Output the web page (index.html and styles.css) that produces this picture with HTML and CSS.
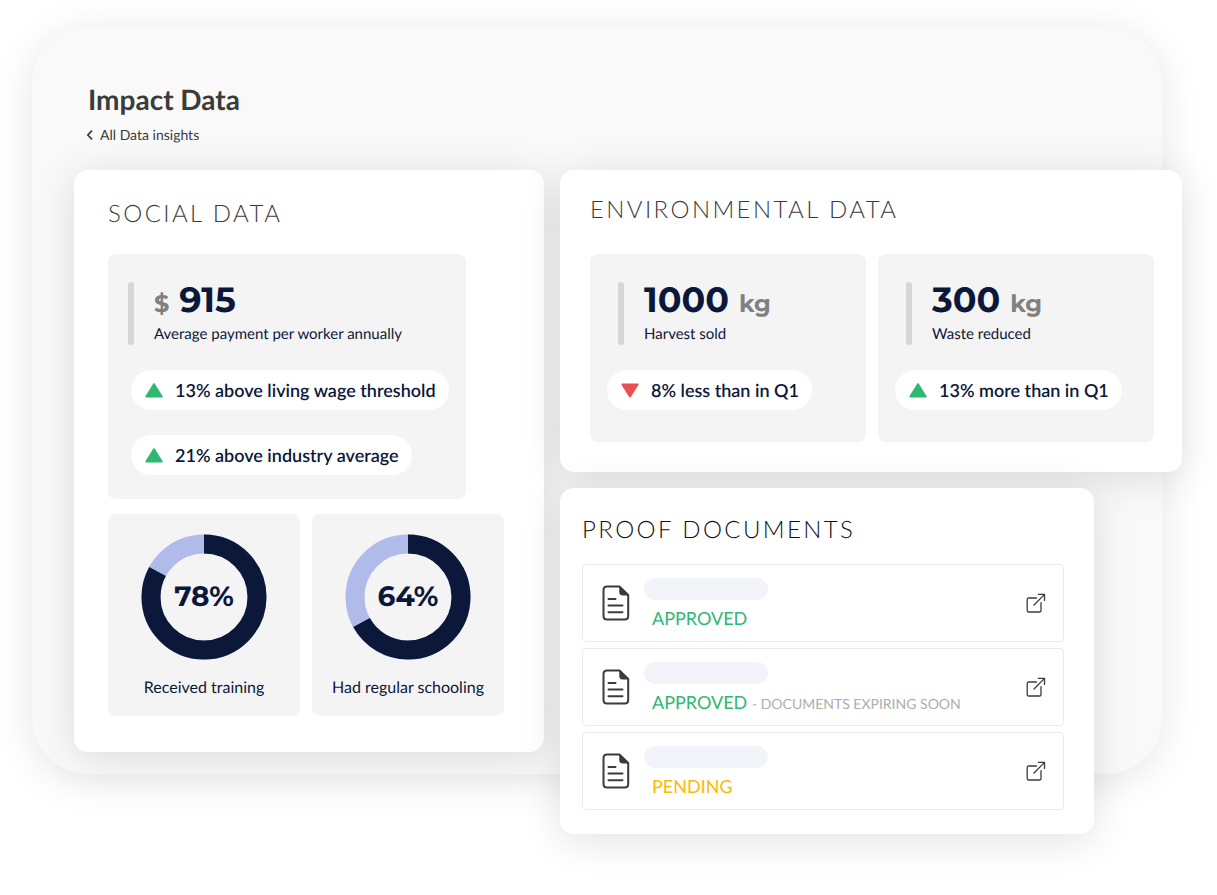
FILE: index.html
```html
<!DOCTYPE html>
<html lang="en">
<head>
  <meta charset="UTF-8" />
  <meta name="viewport" content="width=device-width, initial-scale=1" />
  <title>Impact Data</title>
  <link rel="stylesheet" href="styles.css">
</head>
<body>
  <svg class="sprite" aria-hidden="true">
    <symbol id="up" viewBox="0 0 18 15">
      <path d="M9 1.2 L16.6 13.6 H1.4 Z" fill="#2eb872" stroke="#2eb872" stroke-width="2" stroke-linejoin="round" />
    </symbol>
    <symbol id="down" viewBox="0 0 18 15">
      <path d="M9 13.4 L16.6 1.4 H1.4 Z" fill="#ea4f4f" stroke="#ea4f4f" stroke-width="2" stroke-linejoin="round" />
    </symbol>
    <symbol id="file" viewBox="0 0 28 36">
      <path d="M5 1.5 H17.5 L26.2 10 V31 Q26.2 34.5 22.7 34.5 H5 Q1.5 34.5 1.5 31 V5 Q1.5 1.5 5 1.5 Z" fill="none" stroke="#3b3b3b" stroke-width="2" stroke-linejoin="round" />
      <path d="M17.8 2 L26 10 H20 Q17.8 10 17.8 7.8 Z" fill="#3b3b3b" stroke="#3b3b3b" stroke-linejoin="round" />
      <path d="M6.5 14 H13.5 M6.5 20.5 H20.5 M6.5 27.2 H20.5" fill="none" stroke="#3b3b3b" stroke-width="2" stroke-linecap="round" />
    </symbol>
    <symbol id="external" viewBox="0 0 20 20">
      <path d="M10.5 5 H2.8 Q1.2 5 1.2 6.6 V17.4 Q1.2 19 2.8 19 H13.4 Q15 19 15 17.4 V9.7" fill="none" stroke="#3b3b3b" stroke-width="1.3" stroke-linecap="round" />
      <path d="M8 12 L18.3 1.6 M12.4 1.4 H18.5 V7.4" fill="none" stroke="#3b3b3b" stroke-width="1.3" stroke-linecap="round" />
    </symbol>
  </svg>

  <main class="panel">
    <header class="header">
      <h1>Impact Data</h1>
      <a class="back" href="#">
        <svg width="8" height="10" viewBox="0 0 8 10"><path d="M6 0.6 L1.8 5 L6 9.4" fill="none" stroke="#3b3b3b" stroke-width="1.7" /></svg>
        All Data insights
      </a>
    </header>

    <div class="columns">
      <section class="card social">
        <h2>SOCIAL DATA</h2>

        <div class="stat">
          <div class="figure">
            <div class="value"><span class="unit">$</span> 915</div>
            <div class="label">Average payment per worker annually</div>
          </div>
          <div class="pill"><svg><use href="#up" /></svg>13% above living wage threshold</div>
          <div class="pill"><svg><use href="#up" /></svg>21% above industry average</div>
        </div>

        <div class="donuts">
          <div class="donut-card">
            <div class="donut">
              <svg viewBox="0 0 126 126">
                <circle class="track" cx="63" cy="63" r="53" />
                <circle class="ring" cx="63" cy="63" r="53" pathLength="100" stroke-dasharray="83 100" />
              </svg>
              <span>78%</span>
            </div>
            <div class="donut-label">Received training</div>
          </div>
          <div class="donut-card">
            <div class="donut">
              <svg viewBox="0 0 126 126">
                <circle class="track" cx="63" cy="63" r="53" />
                <circle class="ring" cx="63" cy="63" r="53" pathLength="100" stroke-dasharray="67 100" />
              </svg>
              <span>64%</span>
            </div>
            <div class="donut-label">Had regular schooling</div>
          </div>
        </div>
      </section>

      <div class="side">
        <section class="card environment">
          <h2>ENVIRONMENTAL DATA</h2>
          <div class="stats">
            <div class="stat">
              <div class="figure">
                <div class="value">1000 <span class="unit">kg</span></div>
                <div class="label">Harvest sold</div>
              </div>
              <div class="pill"><svg><use href="#down" /></svg>8% less than in Q1</div>
            </div>
            <div class="stat">
              <div class="figure">
                <div class="value">300 <span class="unit">kg</span></div>
                <div class="label">Waste reduced</div>
              </div>
              <div class="pill"><svg><use href="#up" /></svg>13% more than in Q1</div>
            </div>
          </div>
        </section>

        <section class="card proof">
          <h2>PROOF DOCUMENTS</h2>
          <ul class="docs">
            <li class="doc">
              <svg class="file"><use href="#file" /></svg>
              <div class="info">
                <div class="name"></div>
                <div class="status approved">APPROVED</div>
              </div>
              <a class="open" href="#" aria-label="Open document"><svg><use href="#external" /></svg></a>
            </li>
            <li class="doc">
              <svg class="file"><use href="#file" /></svg>
              <div class="info">
                <div class="name"></div>
                <div class="status approved">APPROVED <small>- DOCUMENTS EXPIRING SOON</small></div>
              </div>
              <a class="open" href="#" aria-label="Open document"><svg><use href="#external" /></svg></a>
            </li>
            <li class="doc">
              <svg class="file"><use href="#file" /></svg>
              <div class="info">
                <div class="name"></div>
                <div class="status pending">PENDING</div>
              </div>
              <a class="open" href="#" aria-label="Open document"><svg><use href="#external" /></svg></a>
            </li>
          </ul>
        </section>
      </div>
    </div>
  </main>
</body>
</html>
```
FILE: styles.css
```css
* {
  box-sizing: border-box;
}

body {
  margin: 0;
  padding: 27px 55px 60px 32px;
  min-height: 100vh;
  font-family: Lato, sans-serif;
  text-rendering: geometricPrecision;
  color: #0c1839;
  background: #fff;
}

h1, h2, ul {
  margin: 0;
  padding: 0;
}

svg {
  display: block;
  flex: none;
}

.sprite {
  position: absolute;
  width: 0;
  height: 0;
}

.panel {
  padding: 55px 0 22px 42px;
  border-radius: 56px;
  background: #f9f9f9;
  box-shadow: 0 6px 40px rgba(0, 0, 0, 0.1);
}

.header {
  padding-left: 14px;
  height: 88px;
  color: #3b3b3b;
}

h1 {
  font-size: 28px;
  line-height: 34px;
  font-weight: 700;
}

.back {
  display: inline-flex;
  align-items: center;
  gap: 6px;
  margin-top: 9px;
  margin-left: -2px;
  font-size: 14px;
  line-height: 20px;
  color: inherit;
  text-decoration: none;
}

.columns {
  display: grid;
  grid-template-columns: 470px 1fr;
  gap: 16px;
  margin-right: -20px;
}

.card {
  border-radius: 14px;
  background: #fff;
  box-shadow: 0 6px 40px rgba(0, 0, 0, 0.12);
}

h2 {
  font-size: 24px;
  line-height: 32px;
  font-weight: 300;
  letter-spacing: 0.1em;
  color: #3b3b3b;
}

.social {
  padding: 28px 40px 36px 34px;
}

.social h2 {
  margin-bottom: 24px;
}

.stat {
  padding: 28px 17px 32px;
  border-radius: 8px;
  background: #f4f4f4;
}

.social .stat {
  margin-right: 38px;
  padding: 28px 20px 24px;
}

.figure {
  position: relative;
  height: 63px;
  margin-left: 11px;
  padding-left: 26px;
}

.social .figure {
  margin-left: 0;
}

.figure::before {
  content: "";
  position: absolute;
  top: 0;
  left: 0;
  width: 6px;
  height: 63px;
  border-radius: 3px;
  background: #d6d6d6;
}

.value {
  font-family: Montserrat, Inter, sans-serif;
  font-size: 35px;
  line-height: 36px;
  font-weight: 700;
}

.unit {
  font-size: 24px;
  line-height: 24px;
  color: #808080;
}

.label {
  margin-top: 6px;
  font-size: 15px;
  line-height: 20px;
}

.pill {
  display: flex;
  align-items: center;
  gap: 12px;
  width: fit-content;
  height: 40px;
  margin-top: 25px;
  padding: 0 13px 0 14px;
  border-radius: 20px;
  background: #fff;
  font-size: 18px;
  font-weight: 600;
  white-space: nowrap;
}

.social .pill {
  margin-left: 3px;
}

.pill svg {
  width: 18px;
  height: 15px;
}

.donuts {
  display: grid;
  grid-template-columns: 1fr 1fr;
  gap: 12px;
  margin-top: 15px;
}

.donut-card {
  display: flex;
  flex-direction: column;
  align-items: center;
  padding: 20px 0 18px;
  border-radius: 8px;
  background: #f4f4f4;
}

.donut {
  display: grid;
  place-items: center;
  width: 126px;
  height: 126px;
  font-family: Montserrat, Inter, sans-serif;
  font-size: 28px;
  font-weight: 700;
}

.donut svg,
.donut span {
  grid-area: 1 / 1;
}

.donut circle {
  fill: none;
  stroke-width: 19;
}

.donut .track {
  stroke: #b1bbea;
}

.donut .ring {
  stroke: #0c1839;
  transform: rotate(-90deg);
  transform-origin: center;
}

.donut-label {
  margin-top: 18px;
  font-size: 16px;
  line-height: 20px;
}

.side {
  /* the documents card hangs below the panel */
  margin-bottom: -82px;
}

.environment {
  padding: 24px 28px 30px 30px;
}

.environment h2 {
  margin-bottom: 28px;
}

.stats {
  display: grid;
  grid-template-columns: 1fr 1fr;
  gap: 12px;
}

.proof {
  margin: 16px 88px 0 0;
  padding: 26px 30px 24px 22px;
}

.proof h2 {
  margin-bottom: 18px;
  color: #111;
}

.docs {
  display: grid;
  gap: 6px;
  list-style: none;
}

.doc {
  display: flex;
  align-items: center;
  gap: 14px;
  height: 78px;
  padding: 0 17px 0 19px;
  border: 1px solid #ebebeb;
  border-radius: 4px;
}

.file {
  width: 28px;
  height: 36px;
}

.info {
  flex: 1;
}

.name {
  width: 124px;
  height: 22px;
  border-radius: 11px;
  background: #f3f4fa;
}

.status {
  height: 24px;
  margin: 5px 0 0 8px;
  font-size: 18px;
  line-height: 26px;
}

.status small {
  font-size: 14px;
  color: #adadad;
}

.approved {
  color: #2eb872;
}

.pending {
  color: #ffb800;
}

.open svg {
  width: 20px;
  height: 20px;
}
```
